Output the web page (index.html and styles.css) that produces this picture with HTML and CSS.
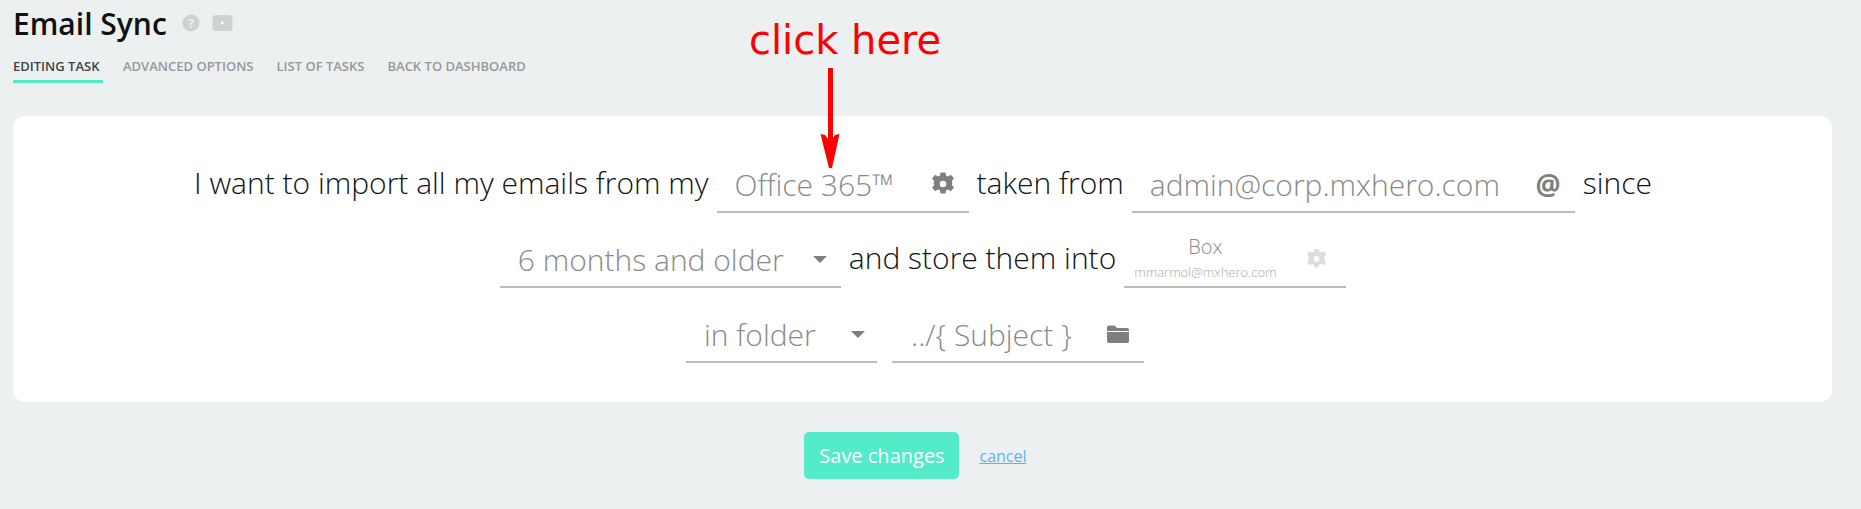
FILE: index.html
```html
<!DOCTYPE html>
<html lang="en">
  <head>
    <meta charset="UTF-8" />
    <title>Email Sync</title>
    <link rel="stylesheet" href="styles.css">
  </head>
  <body>
    <header class="page-head">
      <div class="title-row">
        <h1>Email Sync</h1>
        <svg class="head-icon" width="18" height="18" viewBox="0 0 18 18">
          <circle cx="9" cy="9" r="8.5" fill="#cfd1d2" />
          <text x="9" y="13.5" text-anchor="middle" class="help-mark">?</text>
        </svg>
        <svg class="head-icon" width="21" height="18" viewBox="0 0 21 18">
          <rect x="0.5" y="1" width="20" height="16" rx="3.5" fill="#cfd1d2" />
          <path d="M9 7 L12.5 9 L9 11 Z" fill="#fff" />
        </svg>
      </div>
      <nav class="tabs">
        <a href="#" class="tab active">Editing task</a>
        <a href="#" class="tab">Advanced options</a>
        <a href="#" class="tab">List of tasks</a>
        <a href="#" class="tab">Back to dashboard</a>
      </nav>
    </header>

    <div class="note">click here</div>
    <svg class="note-arrow" width="20" height="102" viewBox="0 0 20 102">
      <rect x="8" y="0" width="5" height="82" fill="#ff0000" />
      <path d="M0.5 66 L5 67 L10.5 74 L15 67 L19.5 66 L12 100 L10.5 100 L9 100 Z" fill="#ff0000" />
    </svg>

    <main class="card">
      <div class="sentence">
        <span>I want to import all my emails from my</span>
        <div class="field w-office">
          <span class="value">Office 365™</span>
          <svg class="icon" width="24" height="24" viewBox="0 0 24 24">
            <path fill="#7f7f7f" fill-rule="evenodd" d="M9.6 0.5h4.8l0.7 3.3 1.9 0.8 2.9-1.8 3.1 3.6-2.2 2.5 0.6 2-0 0.2-0.6 2 2.2 2.5-3.1 3.6-2.9-1.8-1.9 0.8-0.7 3.3H9.6l-0.7-3.3-1.9-0.8-2.9 1.8-3.1-3.6 2.2-2.5-0.6-2 0-0.2 0.6-2-2.2-2.5 3.1-3.6 2.9 1.8 1.9-0.8zM12 8.7a3.3 3.3 0 1 0 0 6.6 3.3 3.3 0 0 0 0-6.6z" />
          </svg>
        </div>
        <span>taken from</span>
        <div class="field w-email">
          <span class="value">admin@corp.mxhero.com</span>
          <span class="at">@</span>
        </div>
        <span>since</span>
      </div>

      <div class="sentence">
        <div class="field w-age">
          <span class="value">6 months and older</span>
          <span class="caret"></span>
        </div>
        <span>and store them into</span>
        <div class="field w-box">
          <div class="stack">
            <span class="stack-name">Box</span>
            <span class="stack-mail">mmarmol@mxhero.com</span>
          </div>
          <svg class="icon" width="21" height="22" viewBox="0 0 24 24">
            <path fill="#dcdcdc" fill-rule="evenodd" d="M9.6 0.5h4.8l0.7 3.3 1.9 0.8 2.9-1.8 3.1 3.6-2.2 2.5 0.6 2-0 0.2-0.6 2 2.2 2.5-3.1 3.6-2.9-1.8-1.9 0.8-0.7 3.3H9.6l-0.7-3.3-1.9-0.8-2.9 1.8-3.1-3.6 2.2-2.5-0.6-2 0-0.2 0.6-2-2.2-2.5 3.1-3.6 2.9 1.8 1.9-0.8zM12 8.7a3.3 3.3 0 1 0 0 6.6 3.3 3.3 0 0 0 0-6.6z" />
          </svg>
        </div>
      </div>

      <div class="sentence last-row">
        <div class="field w-folder">
          <span class="value">in folder</span>
          <span class="caret"></span>
        </div>
        <div class="field w-subject">
          <span class="value">../{ Subject }</span>
          <svg class="icon" width="24" height="20" viewBox="0 0 24 20">
            <path fill="#7f7f7f" d="M1 3.5 Q1 1.5 3 1.5 H8.5 L11 4 H21 Q23 4 23 6 V7 H1 Z M1 8 H23 V17 Q23 19 21 19 H3 Q1 19 1 17 Z" />
          </svg>
        </div>
      </div>
    </main>

    <div class="actions">
      <button class="save-button">Save changes</button>
      <a href="#" class="cancel">cancel</a>
    </div>
  </body>
</html>
```

FILE: styles.css
```css
body {
  font-family: "Open Sans", sans-serif;
  margin: 0;
  padding: 0;
  height: 509px;
  overflow: hidden;
  background-color: #edf0f1;
}

.page-head {
  padding: 0 13px;
}

.title-row {
  display: flex;
  align-items: center;
  height: 46px;
}

.title-row h1 {
  margin: 0 15px 0 0;
  font-size: 30px;
  font-weight: 600;
  color: #111;
}

.head-icon {
  margin-right: 12px;
}

.help-mark {
  font-family: "Open Sans", sans-serif;
  font-size: 13px;
  font-weight: 700;
  fill: #eeeeee;
}

.tabs {
  display: flex;
  gap: 23px;
  margin-top: 10px;
}

.tab {
  display: block;
  height: 27px;
  line-height: 20px;
  font-size: 13px;
  font-weight: 600;
  text-transform: uppercase;
  text-decoration: none;
  color: #979899;
}

.tab.active {
  color: #3c4348;
  border-bottom: 3px solid #50ebc8;
  box-sizing: border-box;
  width: 90px;
  margin-right: -3px;
}

.note {
  position: absolute;
  left: 749px;
  top: 14px;
  font-family: "DejaVu Sans", sans-serif;
  font-size: 40px;
  line-height: 52px;
  color: #ff0000;
}

.note-arrow {
  position: absolute;
  left: 820px;
  top: 68px;
  z-index: 2;
}

.card {
  margin: 33px 29px 0 13px;
  padding: 22px 0 24px;
  background-color: white;
  border-radius: 12px;
  height: 286px;
  box-sizing: border-box;
}

.sentence {
  display: flex;
  justify-content: center;
  align-items: flex-end;
  gap: 8px;
  height: 75px;
  padding-left: 1px;
  font-size: 30px;
  font-weight: 300;
  color: #0e1317;
}

.sentence > span {
  line-height: 56px;
  padding-bottom: 2px;
}

.sentence.last-row {
  gap: 15px;
  padding-left: 0;
  padding-right: 15px;
}

.field {
  display: flex;
  align-items: center;
  justify-content: space-between;
  box-sizing: border-box;
  height: 56px;
  padding: 0 14px 0 18px;
  border-bottom: 2px solid #bcbcbc;
  color: #8a8a8a;
}

.w-office { width: 252px; }
.w-email { width: 443px; }
.w-age { width: 341px; }
.w-box { width: 222px; padding: 0 19px 0 10px; }
.w-folder { width: 191px; padding-right: 12px; }
.w-subject { width: 252px; padding-left: 19px; }

.at {
  font-weight: 700;
  font-size: 28px;
  color: #7f7f7f;
}

.caret {
  width: 0;
  height: 0;
  border-left: 7px solid transparent;
  border-right: 7px solid transparent;
  border-top: 7px solid #7f7f7f;
}

.stack {
  display: flex;
  flex-direction: column;
  align-items: center;
  gap: 3px;
  margin-top: -2px;
}

.stack-name {
  font-size: 20px;
  line-height: 24px;
}

.stack-mail {
  font-size: 13px;
  line-height: 20px;
  color: #a9a9a9;
}

.actions {
  display: flex;
  justify-content: center;
  align-items: center;
  gap: 20px;
  margin: 30px 29px 0 13px;
  padding-right: 14px;
}

.save-button {
  width: 155px;
  height: 47px;
  background-color: #54ebc9;
  color: white;
  font-family: "Open Sans", sans-serif;
  font-size: 20px;
  border: none;
  border-radius: 5px;
}

.cancel {
  font-size: 16px;
  color: #55b5f5;
}
```
